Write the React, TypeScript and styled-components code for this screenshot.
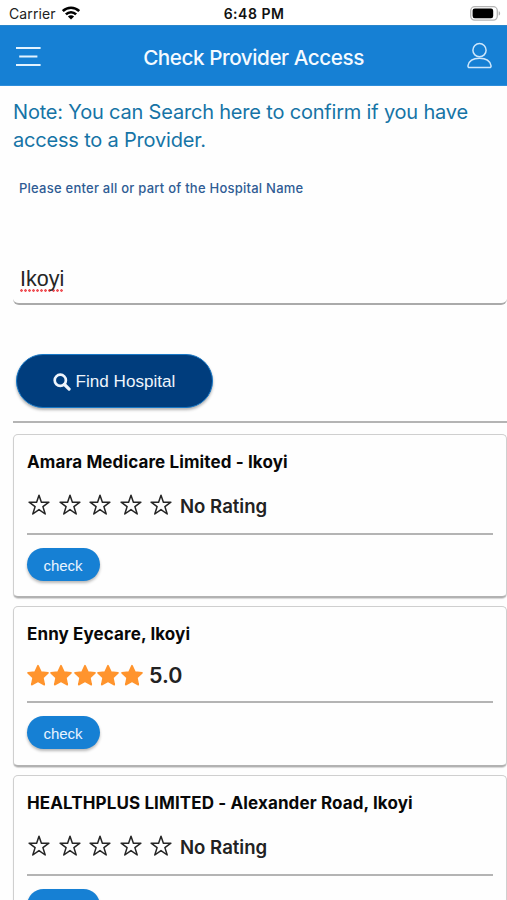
import React from "react";
import styled, { createGlobalStyle } from "styled-components";

const GlobalStyle = createGlobalStyle`
  * { box-sizing: border-box; }
  html, body { margin: 0; padding: 0; background: #fff; }
  body { height: 900px; overflow: hidden; font-family: Inter, "Liberation Sans", sans-serif; }
`;

const Screen = styled.div`
  width: 507px;
  height: 900px;
  overflow: hidden;
  background: #fefefe;
`;

const StatusBar = styled.div`
  height: 25px;
  padding: 1px 6px 0 9px;
  display: grid;
  grid-template-columns: 1fr auto 1fr;
  align-items: center;
  background: #fff;
  color: #222;
  font-size: 14px;
`;

const Carrier = styled.div`
  display: flex;
  align-items: center;
  gap: 6px;
  letter-spacing: 0.1px;
`;

const Clock = styled.div`
  margin-right: 2px;
  font-weight: 600;
  letter-spacing: 0.5px;
  color: #111;
`;

const BatterySlot = styled.div`
  display: flex;
  justify-content: flex-end;
`;

const Header = styled.header`
  height: 61px;
  padding: 0 15px;
  display: grid;
  grid-template-columns: 1fr auto 1fr;
  align-items: center;
  background: #1680d4;
  border-top: 1px solid #2a86ca;
  border-bottom: 1px solid #2f8edb;
  color: #f4faff;
`;

const Title = styled.h1`
  margin: 4px 0 0;
  font-size: 20.7px;
  font-weight: 500;
  line-height: 28px;
  letter-spacing: -0.45px;
`;

const HeaderEnd = styled.div`
  display: flex;
  justify-content: flex-end;
`;

const Main = styled.main`
  padding: 12px 0 0 13px;
`;

const Note = styled.p`
  margin: 0;
  font-size: 20px;
  line-height: 28px;
  letter-spacing: -0.19px;
  color: #1674a6;
`;

const Label = styled.label`
  display: block;
  margin: 24px 0 0 6px;
  height: 20px;
  line-height: 20px;
  font-size: 13px;
  font-weight: 500;
  letter-spacing: 0.24px;
  color: #2f5c94;
`;

const Field = styled.div`
  margin-top: 57px;
  height: 50px;
  padding: 10px 7px 0;
  border-bottom: 2px solid #aaa;
  border-radius: 6px;
`;

const FieldText = styled.span`
  display: inline-block;
  font: 21.5px/28px "Liberation Sans", sans-serif;
  color: #262626;
`;

const SpellMark = styled.span`
  display: block;
  height: 3px;
  margin-top: -4px;
  background: radial-gradient(circle at 1.5px 1.5px, #f0555a 1px, transparent 1.6px) 0 0 / 4px 3px repeat-x;
`;

const FindButton = styled.button`
  margin: 49px 0 0 3px;
  width: 197px;
  height: 54px;
  padding: 1px 1px 0 0;
  display: flex;
  align-items: center;
  justify-content: center;
  gap: 5px;
  border: 1px solid #1878c6;
  border-radius: 27px;
  background: #003d7d;
  box-shadow: 0 2px 3px rgba(0, 0, 0, 0.3);
  color: #eef5fc;
  font: 17.1px "Liberation Sans", sans-serif;
`;

const Rule = styled.hr<{ $gap: number }>`
  height: 2px;
  margin: ${(p) => p.$gap}px 0 0;
  border: 0;
  background: #b4b4b4;
`;

const CardList = styled.section`
  margin-top: 11px;
  display: flex;
  flex-direction: column;
  gap: 8px;
`;

const Card = styled.article<{ $height: number }>`
  height: ${(p) => p.$height}px;
  padding: 16px 13px 0;
  background: #fefefe;
  border: 1px solid #cfcfcf;
  border-bottom: 2px solid #b2b2b2;
  border-radius: 5px;
  box-shadow: 0 1px 1px rgba(0, 0, 0, 0.16);
`;

const Name = styled.h2`
  margin: 0;
  font-size: 17px;
  font-weight: 700;
  line-height: 22px;
  letter-spacing: 0.12px;
  white-space: nowrap;
  color: #080808;
`;

const Rating = styled.div<{ $rated: boolean }>`
  height: ${(p) => (p.$rated ? 24 : 28)}px;
  margin-top: 18px;
  display: flex;
  align-items: center;
`;

const Stars = styled.div<{ $pitch: number; $left: number }>`
  display: grid;
  grid-template-columns: repeat(5, ${(p) => p.$pitch}px);
  margin-left: ${(p) => p.$left}px;
`;

const Score = styled.span<{ $size: number; $left: number; $top: number }>`
  margin: ${(p) => p.$top}px 0 0 ${(p) => p.$left}px;
  font-size: ${(p) => p.$size}px;
  font-weight: 600;
  line-height: 24px;
  color: #222;
`;

const CheckButton = styled.button`
  display: block;
  width: 73px;
  height: 33px;
  margin-top: 13px;
  padding: 1px 1px 0 0;
  border: 0;
  border-radius: 17px;
  background: #1680d4;
  box-shadow: 0 2px 3px rgba(0, 0, 0, 0.28);
  color: #e8f4ff;
  font: 15px "Liberation Sans", sans-serif;
`;

const WifiIcon = () => (
  <svg width="18" height="14" viewBox="0 0 18 14" fill="none" stroke="#000" strokeWidth="2.6">
    <path d="M0.8 5.1C5.4 0.6 12.6 0.6 17.2 5.1" />
    <path d="M3.9 8.4C6.8 5.5 11.2 5.5 14.1 8.4" />
    <path d="M9 13.6L5.9 10.5C7.7 8.9 10.3 8.9 12.1 10.5Z" fill="#000" stroke="none" />
  </svg>
);

const BatteryIcon = () => (
  <svg width="31" height="15" viewBox="0 0 31 15">
    <rect x="0.7" y="0.7" width="26.6" height="13.4" rx="4" fill="#fff" stroke="#b5b5b5" strokeWidth="1.3" />
    <rect x="2.6" y="2.6" width="20.6" height="9.6" rx="2.2" fill="#000" />
    <path d="M28.7 5.2C30.6 5.8 30.6 9 28.7 9.6Z" fill="#b0b0b0" />
  </svg>
);

const MenuIcon = () => (
  <svg width="27" height="22" viewBox="0 0 27 22" stroke="#e3f3ff" strokeWidth="1.9">
    <path d="M1 3H25.6M4.2 11.5H22.4M1 20H25.6" />
  </svg>
);

const UserIcon = () => (
  <svg width="26" height="27" viewBox="0 0 26 27" fill="none" stroke="#cde6fb" strokeWidth="1.5">
    <circle cx="13.5" cy="8.2" r="6.6" />
    <path d="M3.5 25.6C2.3 25.6 1.8 24.8 2 23.6C2.9 18.8 7.5 16.2 13.5 16.2S24.1 18.8 25 23.6C25.2 24.8 24.7 25.6 23.5 25.6Z" />
  </svg>
);

const SearchIcon = () => (
  <svg width="18" height="18" viewBox="0 0 18 18" fill="none" stroke="#eef5fc">
    <circle cx="7.3" cy="7.3" r="5.6" strokeWidth="2.7" />
    <path d="M11.5 11.5L16.1 16.1" strokeWidth="3.2" strokeLinecap="round" />
  </svg>
);

const OutlineStar = () => (
  <svg width="22" height="22" viewBox="0 0 22 22" fill="none" stroke="#252525" strokeWidth="1.5" strokeLinejoin="round">
    <path d="M11 1.3L13.4 8.2H20.9L14.9 12.6L17.2 20L11 15.6L4.8 20L7.1 12.6L1.1 8.2H8.6Z" />
  </svg>
);

const SolidStar = () => (
  <svg width="24" height="23" viewBox="0 0 24 23" fill="#ff942d" stroke="#ff942d" strokeWidth="1.6" strokeLinejoin="round">
    <path d="M12 1.6L15 8L22 8.9L16.9 13.6L18.3 20.7L12 17.3L5.7 20.7L7.1 13.6L2 8.9L9 8Z" />
  </svg>
);

const providers = [
  { name: "Amara Medicare Limited - Ikoyi", score: null, height: 164 },
  { name: "Enny Eyecare, Ikoyi", score: "5.0", height: 161 },
  { name: "HEALTHPLUS LIMITED - Alexander Road, Ikoyi", score: null, height: 164 },
];

const ProviderRating = ({ score }: { score: string | null }) => {
  const rated = score !== null;
  return (
    <Rating $rated={rated}>
      <Stars $pitch={rated ? 23.4 : 30.6} $left={rated ? -1 : 1}>
        {[0, 1, 2, 3, 4].map((i) => (rated ? <SolidStar key={i} /> : <OutlineStar key={i} />))}
      </Stars>
      <Score $size={rated ? 21.5 : 18.6} $left={rated ? 6 : -1} $top={rated ? -1 : 1}>
        {score ?? "No Rating"}
      </Score>
    </Rating>
  );
};

export default function App() {
  return (
    <Screen>
      <GlobalStyle />
      <StatusBar>
        <Carrier>Carrier <WifiIcon /></Carrier>
        <Clock>6:48 PM</Clock>
        <BatterySlot><BatteryIcon /></BatterySlot>
      </StatusBar>
      <Header>
        <MenuIcon />
        <Title>Check Provider Access</Title>
        <HeaderEnd><UserIcon /></HeaderEnd>
      </Header>
      <Main>
        <Note>Note: You can Search here to confirm if you have<br />access to a Provider.</Note>
        <Label>Please enter all or part of the Hospital Name</Label>
        <Field><FieldText>Ikoyi<SpellMark /></FieldText></Field>
        <FindButton><SearchIcon />Find Hospital</FindButton>
        <Rule $gap={13} />
        <CardList>
          {providers.map((p) => (
            <Card key={p.name} $height={p.height}>
              <Name>{p.name}</Name>
              <ProviderRating score={p.score} />
              <Rule $gap={14} />
              <CheckButton>check</CheckButton>
            </Card>
          ))}
        </CardList>
      </Main>
    </Screen>
  );
}
